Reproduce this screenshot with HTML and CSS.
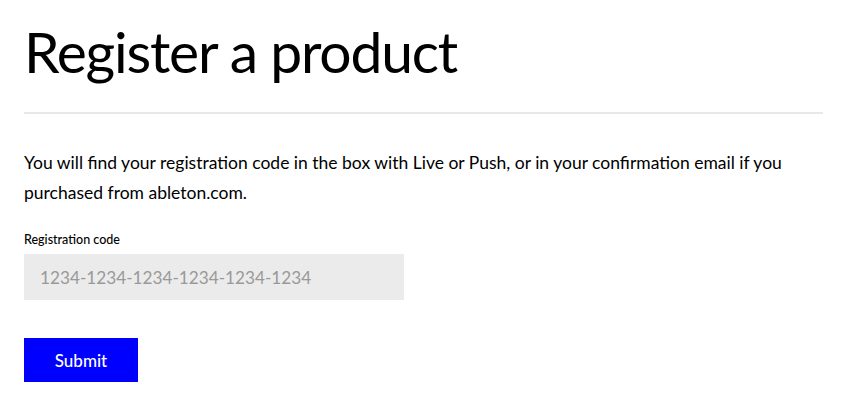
FILE: index.html
```html
<!DOCTYPE html>
<html lang="en">
<head>
<meta charset="UTF-8">
<title>Register a product</title>
<link rel="stylesheet" href="styles.css">
</head>
<body>

<div class="container">
    <h1 class="title">Register a product</h1>
    <hr class="divider">
    <p class="intro">You will find your registration code in the box with Live or Push, or in your confirmation email if you purchased from ableton.com.</p>
    <form class="register-form" onsubmit="return false;">
        <label class="field-label" for="regCode">Registration code</label>
        <input class="field-input" type="text" id="regCode" placeholder="1234-1234-1234-1234-1234-1234">
        <button class="btn" type="submit">Submit</button>
    </form>
</div>

</body>
</html>
```
FILE: styles.css
```css
body {
    font-family: 'Lato', sans-serif;
    margin: 0;
    color: #000;
    background-color: #fff;
}
.container {
    padding: 19px 24px 0;
}
.title {
    font-size: 57px;
    line-height: 64px;
    font-weight: 400;
    letter-spacing: -1.2px;
    margin: 0;
}
.divider {
    border: none;
    border-top: 2px solid #e8e8e8;
    margin: 29px 0 34px;
}
.intro {
    font-size: 17.5px;
    line-height: 30px;
    margin: 0 0 24px;
}
.register-form {
    display: flex;
    flex-direction: column;
    align-items: flex-start;
}
.field-label {
    font-size: 12.5px;
    font-weight: 500;
    line-height: 16px;
    margin-bottom: 6px;
}
.field-input {
    width: 380px;
    height: 46px;
    box-sizing: border-box;
    padding: 0 16px;
    border: none;
    background-color: #ebebeb;
    font-family: 'Lato', sans-serif;
    font-size: 17.2px;
    color: #000;
    outline: none;
}
.field-input::placeholder {
    color: #999;
}
.btn {
    margin-top: 38px;
    width: 114px;
    height: 44px;
    padding: 0;
    border: none;
    background-color: #0000ff;
    color: #fff;
    font-family: 'Lato', sans-serif;
    font-size: 17px;
    font-weight: 500;
    cursor: pointer;
}
```
